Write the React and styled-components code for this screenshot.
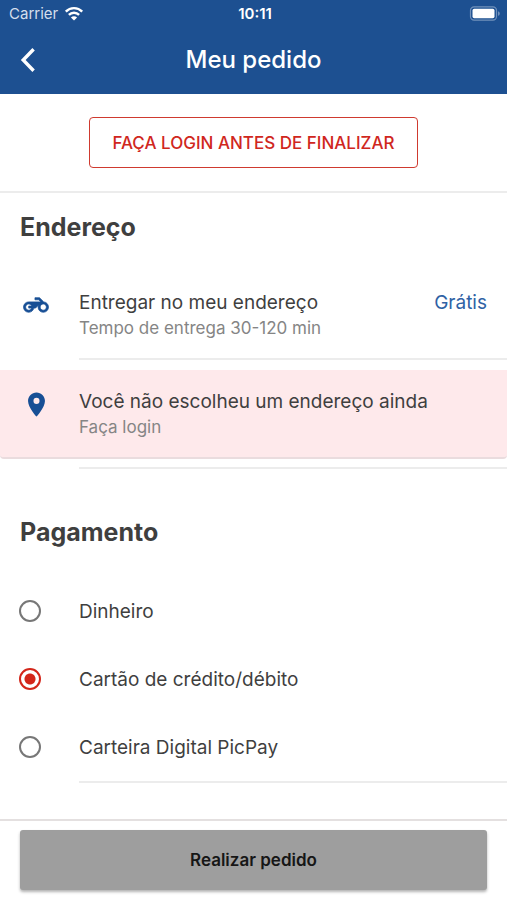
import React, { useState } from 'react';
import styled, { createGlobalStyle } from 'styled-components';
import { MdLocationOn } from 'react-icons/md';

const payments = [
  { id: 'dinheiro', label: 'Dinheiro' },
  { id: 'cartao', label: 'Cartão de crédito/débito' },
  { id: 'picpay', label: 'Carteira Digital PicPay' },
];

const Motorcycle = () => (
  <svg
    width="26"
    height="26"
    viewBox="-0.5 -0.5 25 25"
    fill="currentColor"
    stroke="currentColor"
    strokeWidth="0.7"
    aria-hidden="true"
  >
    <path d="M19.44 9.03L15.41 5H11v2h3.59l2 2H5c-2.8 0-5 2.2-5 5s2.2 5 5 5c2.46 0 4.45-1.69 4.9-4h1.65l2.77-2.77c-.21.54-.32 1.14-.32 1.77 0 2.8 2.2 5 5 5s5-2.2 5-5c0-2.65-1.97-4.77-4.56-4.97zM7.82 15C7.4 16.15 6.28 17 5 17c-1.63 0-3-1.37-3-3s1.37-3 3-3c1.28 0 2.4.85 2.82 2H5v2h2.82zM19 17c-1.66 0-3-1.34-3-3s1.34-3 3-3 3 1.34 3 3-1.34 3-3 3z" />
  </svg>
);

const StatusBar = () => (
  <Status>
    <Carrier>
      Carrier
      <svg width="20" height="15" viewBox="0 0 20 15" fill="none" stroke="#fff" strokeWidth="2.4" aria-hidden="true">
        <path d="M1.8 5.6C6.3 1 13.7 1 18.2 5.6" />
        <path d="M4.9 8.9c2.8-2.9 7.4-2.9 10.2 0" />
        <path d="M10 14.6l-3.1-3.2c1.7-1.7 4.5-1.7 6.2 0z" fill="#fff" stroke="none" />
      </svg>
    </Carrier>
    <Clock>10:11</Clock>
    <Battery>
      <svg width="32" height="15" viewBox="0 0 32 15" aria-hidden="true">
        <rect x="1.5" y="0.8" width="26" height="13.4" rx="3.6" fill="none" stroke="#7191bb" strokeWidth="1.2" />
        <rect x="3.5" y="2.8" width="22" height="9.4" rx="1.8" fill="#fff" />
        <path d="M29 5.2c2.4.9 2.4 3.7 0 4.6z" fill="#7191bb" />
      </svg>
    </Battery>
  </Status>
);

const App = () => {
  const [payment, setPayment] = useState('cartao');

  return (
    <Page>
      <GlobalStyle />
      <Header>
        <StatusBar />
        <NavBar>
          <BackButton aria-label="Voltar">
            <svg width="16" height="26" viewBox="0 0 16 26" fill="none" stroke="#fff" strokeWidth="3.4">
              <path d="M13.6 2.2L3.2 13l10.4 10.8" />
            </svg>
          </BackButton>
          <Title>Meu pedido</Title>
        </NavBar>
      </Header>

      <LoginBox>
        <LoginButton>FAÇA LOGIN ANTES DE FINALIZAR</LoginButton>
      </LoginBox>

      <Section>
        <Heading>Endereço</Heading>
        <Row>
          <IconBox>
            <Motorcycle />
          </IconBox>
          <RowText>
            <RowTitle>Entregar no meu endereço</RowTitle>
            <RowSub>Tempo de entrega 30-120 min</RowSub>
          </RowText>
          <Price>Grátis</Price>
        </Row>
        <Divider />
        <AlertRow>
          <IconBox>
            <MdLocationOn size={29} />
          </IconBox>
          <RowText>
            <RowTitle>Você não escolheu um endereço ainda</RowTitle>
            <RowSub>Faça login</RowSub>
          </RowText>
        </AlertRow>
        <Divider />
      </Section>

      <Payment>
        <Heading>Pagamento</Heading>
        <Options role="radiogroup" aria-label="Pagamento">
          {payments.map(({ id, label }) => (
            <Option key={id}>
              <Radio
                type="radio"
                name="payment"
                value={id}
                checked={payment === id}
                onChange={() => setPayment(id)}
              />
              {label}
            </Option>
          ))}
        </Options>
        <Divider />
      </Payment>

      <Footer>
        <OrderButton>Realizar pedido</OrderButton>
      </Footer>
    </Page>
  );
};
export default App;

const GlobalStyle = createGlobalStyle`
  * {
    box-sizing: border-box;
  }
  body {
    margin: 0;
    background: #fff;
    font-family: Inter, 'Liberation Sans', sans-serif;
  }
  button, input {
    font-family: inherit;
  }
`;

const Page = styled.div`
  display: flex;
  flex-direction: column;
  min-height: 100vh;
  color: #3f3f3f;
`;

const Header = styled.header`
  background: #1d5091;
  color: #fff;
`;

const Status = styled.div`
  display: grid;
  grid-template-columns: 1fr auto 1fr;
  align-items: center;
  height: 27px;
  padding: 0 6px 0 9px;
  font-size: 15px;
  line-height: 18px;
`;

const Carrier = styled.div`
  display: flex;
  align-items: center;
  gap: 6px;
  color: #d5dfec;
`;

const Clock = styled.div`
  font-weight: 600;
`;

const Battery = styled.div`
  display: flex;
  justify-content: flex-end;
`;

const NavBar = styled.div`
  display: grid;
  grid-template-columns: 56px 1fr 56px;
  align-items: center;
  height: 67px;
  padding-bottom: 2px;
`;

const BackButton = styled.button`
  display: flex;
  justify-content: center;
  padding: 8px 0;
  border: 0;
  background: none;
  cursor: pointer;
`;

const Title = styled.h1`
  margin: 0;
  text-align: center;
  font-size: 24px;
  line-height: 30px;
  font-weight: 500;
`;

const LoginBox = styled.div`
  display: flex;
  justify-content: center;
  padding: 23px 20px;
  border-bottom: 2px solid #ececec;
`;

const LoginButton = styled.button`
  height: 51px;
  padding: 0 22px;
  border: 1px solid #cf3a2f;
  border-radius: 4px;
  background: #fff;
  color: #d0271d;
  font-size: 17px;
  font-weight: 500;
  cursor: pointer;
`;

const Section = styled.section`
  padding-top: 18px;
`;

const Payment = styled.section`
  padding-top: 47px;
`;

const Heading = styled.h2`
  margin: 0;
  padding-left: 20px;
  font-size: 25px;
  line-height: 32px;
  font-weight: 700;
`;

const Row = styled.div`
  display: flex;
  padding: 47px 20px 18px 23px;
`;

const AlertRow = styled(Row)`
  margin: 10px 0 8px;
  padding-top: 19px;
  background: #fee9eb;
  border-bottom: 2px solid #eadcde;
  border-radius: 0 0 4px 4px;
`;

const IconBox = styled.div`
  display: flex;
  justify-content: center;
  align-items: center;
  flex: none;
  width: 26px;
  height: 30px;
  margin-right: 30px;
  color: #174f95;

  svg {
    flex: none;
  }
`;

const RowText = styled.div`
  flex: 1;
`;

const RowTitle = styled.div`
  font-size: 19px;
  line-height: 26px;
`;

const RowSub = styled.div`
  font-size: 17px;
  line-height: 24px;
  color: #858585;
`;

const Price = styled.div`
  font-size: 19px;
  line-height: 26px;
  color: #2f62a5;
`;

const Divider = styled.hr`
  height: 2px;
  margin: 0 0 0 79px;
  border: 0;
  background: #ececec;
`;

const Options = styled.div`
  padding-top: 29px;
`;

const Option = styled.label`
  display: flex;
  align-items: center;
  gap: 38px;
  height: 68px;
  padding-left: 19px;
  font-size: 19px;
  cursor: pointer;
`;

const Radio = styled.input`
  appearance: none;
  width: 22px;
  height: 22px;
  margin: 0;
  border: 2px solid #777;
  border-radius: 50%;
  cursor: pointer;

  &:checked {
    border-color: #d3261a;
    background: radial-gradient(circle, #d3261a 5px, #fff 6px);
  }
`;

const Footer = styled.footer`
  margin-top: auto;
  padding: 9px 20px 10px;
  border-top: 2px solid #e4e0e0;
`;

const OrderButton = styled.button`
  display: block;
  width: 100%;
  height: 60px;
  border: 0;
  border-radius: 3px;
  background: #9e9e9e;
  box-shadow: 0 2px 3px rgba(0, 0, 0, 0.3);
  color: #161616;
  font-size: 17px;
  font-weight: 600;
  cursor: pointer;
`;
